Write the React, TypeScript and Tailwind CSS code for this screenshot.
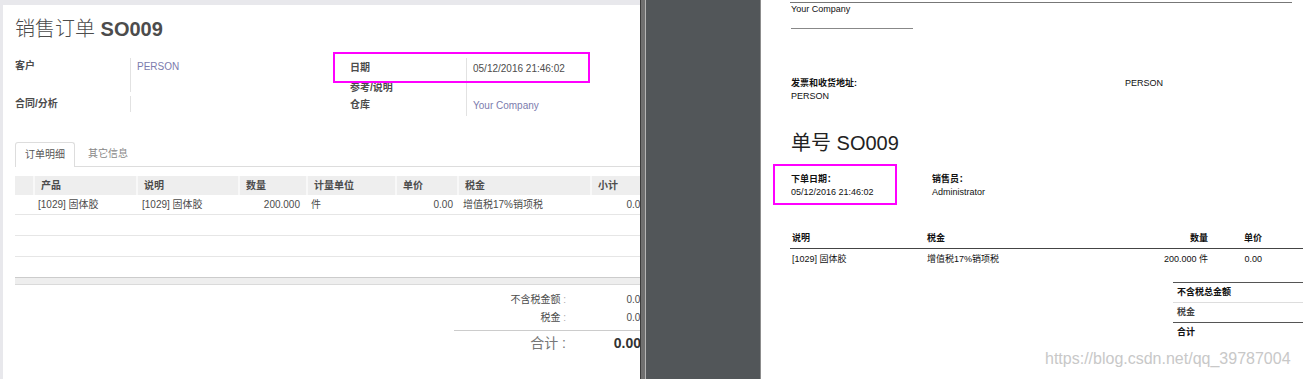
import React from "react";

const font = "font-['Liberation_Sans','Noto_Sans_CJK_SC',sans-serif]";

const OdooForm = () => {
    const cols = [
        { w: "w-[18px]", label: "" },
        { w: "w-[103px]", label: "产品" },
        { w: "w-[102px]", label: "说明" },
        { w: "w-[68px]", label: "数量" },
        { w: "w-[89px]", label: "计量单位" },
        { w: "w-[62px]", label: "单价" },
        { w: "w-[133px]", label: "税金" },
        { w: "w-[60px]", label: "小计" },
    ];

    return (
        <div className="w-[640px] shrink-0 overflow-hidden bg-[#e8e8ec] pl-[3px] pt-[5px]">
            <div className="h-full w-[700px] bg-white pl-[12px] pt-[9px] text-[10px] text-[#4c4c4c]">
                {/* Title */}
                <h1 className="h-[30px] text-[20px] leading-[30px] text-[#4c4c4c]">
                    <span className="font-light">销售订单</span> <span className="font-bold">SO009</span>
                </h1>

                {/* Fields */}
                <div className="mt-[14px] flex">
                    <div className="grid w-[319px] grid-cols-[115px_1fr]">
                        <div className="h-[34px] font-bold leading-[16px]">客户</div>
                        <div className="h-[34px] border-l border-[#e2e2e2] pl-[6px] leading-[18px] text-[#7c7bad]">PERSON</div>
                        <div className="h-[16px] font-bold leading-[16px]">合同/分析</div>
                        <div className="h-[16px] border-l border-[#e2e2e2]" />
                    </div>
                    <div className="grid grid-cols-[116px_1fr] pl-[16px]">
                        <div className="h-[22px] pt-[2px] font-bold leading-[16px]">日期</div>
                        <div className="h-[22px] border-l border-[#e2e2e2] pl-[6px] pt-[3px] leading-[16px]">
                            05/12/2016 21:46:02
                        </div>
                        <div className="h-[17px] font-bold leading-[16px]">参考/说明</div>
                        <div className="h-[17px] border-l border-[#e2e2e2]" />
                        <div className="h-[19px] font-bold leading-[16px]">仓库</div>
                        <div className="h-[19px] border-l border-[#e2e2e2] pl-[6px] pt-[1px] leading-[16px] text-[#7c7bad]">
                            Your Company
                        </div>
                    </div>
                </div>

                {/* Tabs */}
                <div className="mt-[26px] flex h-[25px] border-b border-[#dddddd]">
                    <div className="h-[25px] rounded-t-[3px] border border-b-0 border-[#dddddd] bg-white px-[9px] leading-[24px] text-[#555]">
                        订单明细
                    </div>
                    <div className="ml-[3px] px-[10px] leading-[24px] text-[#888]">其它信息</div>
                </div>

                {/* Lines table */}
                <div className="mt-[9px] w-[635px]">
                    <div className="flex h-[19px] items-center bg-[#eeeeee] font-bold">
                        {cols.map((c, i) => (
                            <div
                                key={i}
                                className={`${c.w} h-full pl-[6px] leading-[19px] ${i > 0 ? "border-l-2 border-[#f8f8f8]" : ""}`}
                            >
                                {c.label}
                            </div>
                        ))}
                    </div>
                    <div className="flex h-[20px] items-center border-b border-[#e6e6e6]">
                        <div className="w-[18px]" />
                        <div className="w-[103px] pl-[5px]">[1029] 固体胶</div>
                        <div className="w-[102px] pl-[6px]">[1029] 固体胶</div>
                        <div className="w-[68px] pr-[6px] text-right">200.000</div>
                        <div className="w-[89px] pl-[5px]">件</div>
                        <div className="w-[62px] pr-[4px] text-right">0.00</div>
                        <div className="w-[133px] pl-[6px]">增值税17%销项税</div>
                        <div className="w-[60px] pr-[4px] text-right">0.00</div>
                    </div>
                    <div className="h-[21px] border-b border-[#e6e6e6]" />
                    <div className="h-[21px] border-b border-[#e6e6e6]" />
                    <div className="h-[20px]" />
                    <div className="h-[8px] border-y border-t-[#cccccc] border-b-[#dadada] bg-[#eeeeee]" />
                </div>

                {/* Totals */}
                <div className="ml-[439px] mt-[5px] w-[192px]">
                    <div className="flex h-[18px] items-center">
                        <div className="w-[112px] text-right">
                            不含税金额<span className="text-[#aaa]"> :</span>
                        </div>
                        <div className="w-[80px] text-right">0.00</div>
                    </div>
                    <div className="flex h-[18px] items-center">
                        <div className="w-[112px] text-right">
                            税金<span className="text-[#aaa]"> :</span>
                        </div>
                        <div className="w-[80px] text-right">0.00</div>
                    </div>
                    <div className="mt-[4px] flex h-[25px] items-center border-t border-[#cccccc]">
                        <div className="w-[112px] text-right text-[14px] text-[#777]">合计 :</div>
                        <div className="w-[75px] text-right text-[14px] font-bold text-[#333]">0.00</div>
                    </div>
                </div>
            </div>
        </div>
    );
};

const ViewerGap = () => (
    <div className="flex w-[121px] shrink-0">
        <div className="w-px bg-[#3c3c3c]" />
        <div className="w-[4px] bg-[#707070]" />
        <div className="w-px bg-[#b4b4b4]" />
        <div className="flex-1 bg-[#525659]" />
        <div className="w-px bg-[#8c8c8c]" />
    </div>
);

const Report = () => (
    <div className="flex-1 bg-white pl-[29px] pt-[2px] text-[9px] leading-[13px] text-[#111]">
        {/* Header */}
        <div className="w-[502px] border-t border-[#777]">
            <div className="pl-px leading-[12px]">Your Company</div>
        </div>
        <div className="ml-px mt-[13px] h-px w-[122px] bg-[#888]" />

        {/* Address */}
        <div className="mt-[48px] flex pl-px">
            <div className="w-[334px]">
                <div className="font-bold">发票和收货地址:</div>
                <div>PERSON</div>
            </div>
            <div>PERSON</div>
        </div>

        {/* Title */}
        <h2 className="mt-[27px] pl-px text-[20px] leading-[26px] text-[#222]">单号 SO009</h2>

        {/* Info */}
        <div className="mt-[17px] flex pl-px">
            <div className="w-[141px]">
                <div className="font-bold">下单日期：</div>
                <div>05/12/2016 21:46:02</div>
            </div>
            <div>
                <div className="font-bold">销售员：</div>
                <div>Administrator</div>
            </div>
        </div>

        {/* Lines */}
        <div className="mt-[31px]">
            <div className="flex h-[19px] border-b border-[#444] pt-[2px] font-bold">
                <div className="w-[135px] pl-[2px]">说明</div>
                <div className="w-[186px] pl-[2px]">税金</div>
                <div className="w-[100px] pr-[3px] text-right">数量</div>
                <div className="w-[55px] pr-[4px] text-right">单价</div>
            </div>
            <div className="flex h-[21px] pt-[4px]">
                <div className="w-[135px] pl-[2px]">[1029] 固体胶</div>
                <div className="w-[186px] pl-[2px]">增值税17%销项税</div>
                <div className="w-[100px] pr-[3px] text-right">200.000 件</div>
                <div className="w-[55px] pr-[4px] text-right">0.00</div>
            </div>
        </div>

        {/* Totals */}
        <div className="ml-[383px] mt-[12px] border-t border-[#555]">
            <div className="h-[20px] border-b border-[#dddddd] pl-[4px] font-bold leading-[19px]">不含税总金额</div>
            <div className="h-[20px] border-b border-[#555] pl-[4px] font-bold leading-[19px] text-[#444]">税金</div>
            <div className="h-[20px] pl-[4px] font-bold leading-[19px]">合计</div>
        </div>
    </div>
);

export default function App() {
    return (
        <div className={`relative flex h-[379px] w-[1303px] overflow-hidden bg-white ${font}`}>
            <OdooForm />
            <ViewerGap />
            <Report />

            {/* Annotations over the screenshot */}
            <div className="pointer-events-none absolute left-[333px] top-[52px] h-[31px] w-[257px] border-2 border-[#ff00ff]" />
            <div className="pointer-events-none absolute left-[773px] top-[164px] h-[41px] w-[124px] border-2 border-[#ff00ff]" />
            <div className="pointer-events-none absolute left-[1045px] top-[349px] text-[16px] leading-[20px] text-[#c8c8c8]">
                https://blog.csdn.net/qq_39787004
            </div>
        </div>
    );
}
